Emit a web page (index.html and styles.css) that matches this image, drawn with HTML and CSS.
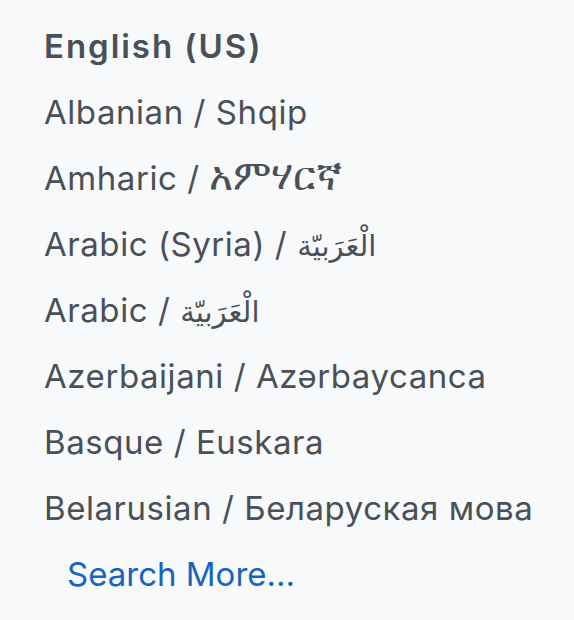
FILE: index.html
```
<!DOCTYPE html>
<html lang="en">
<head>
<meta charset="utf-8">
<link rel="stylesheet" href="styles.css">
</head>
<body>
<ul class="lang-list">
  <li class="lang-item current">English (US)</li>
  <li class="lang-item">Albanian / Shqip</li>
  <li class="lang-item">Amharic / <span class="am">አምሃርኛ</span></li>
  <li class="lang-item">Arabic (Syria) / <span class="ar">الْعَرَبيّة</span></li>
  <li class="lang-item">Arabic / <span class="ar">الْعَرَبيّة</span></li>
  <li class="lang-item">Azerbaijani / Azərbaycanca</li>
  <li class="lang-item">Basque / Euskara</li>
  <li class="lang-item">Belarusian / Беларуская мова</li>
  <li class="lang-item more"><a class="search-more" href="#">Search More...</a></li>
</ul>
</body>
</html>
```
FILE: styles.css
```
html, body {
  margin: 0;
  padding: 0;
  background: #f8f9fa;
}
body {
  font-family: Inter, "Noto Sans", "DejaVu Sans", sans-serif;
  color: #495057;
}
.lang-list {
  list-style: none;
  margin: 0;
  padding: 13px 0 0 44px;
}
.lang-item {
  font-size: 33px;
  line-height: 66px;
  height: 66px;
  letter-spacing: 0.55px;
  white-space: nowrap;
}
.lang-item.current {
  font-weight: 600;
  letter-spacing: 1.95px;
}
.ar {
  font-family: "DejaVu Sans", "Noto Sans", sans-serif;
  font-size: 29px;
  line-height: 0;
  letter-spacing: 0;
}
.am {
  font-size: 41px;
  line-height: 0;
  letter-spacing: 0;
}
.more {
  padding-left: 23px;
}
.search-more {
  color: #1565c0;
  letter-spacing: 0;
  text-decoration: none;
}
```
